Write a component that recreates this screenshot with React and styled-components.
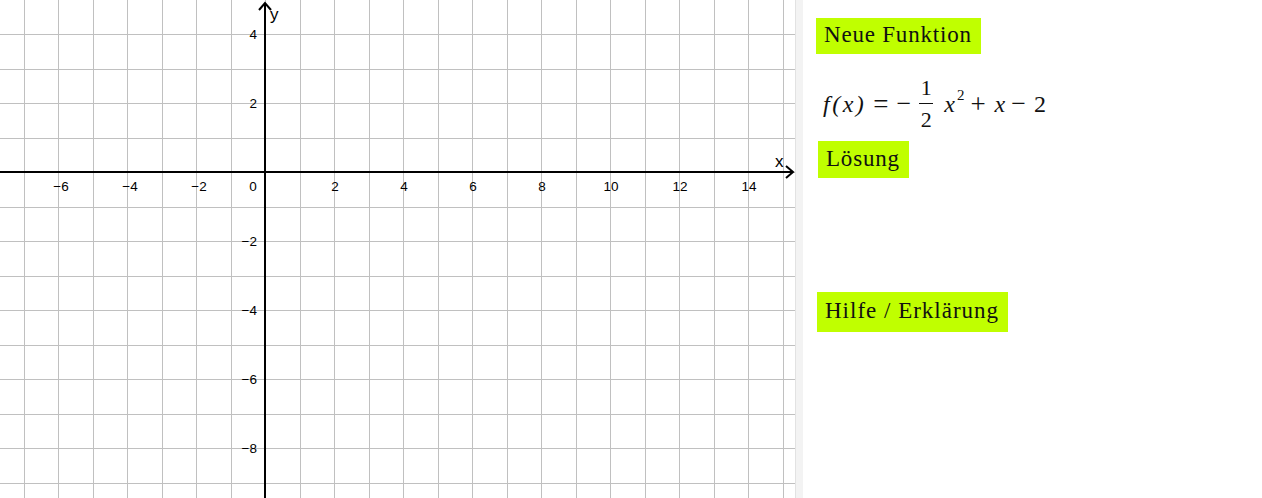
import React from 'react';
import styled, { createGlobalStyle } from 'styled-components';

const GlobalStyle = createGlobalStyle`
  html, body {
    margin: 0;
    padding: 0;
    background: #fff;
    overflow: hidden;
  }
`;

// Koordinatensystem
const UNIT = 34.5;
const ORIGIN_X = 265;
const ORIGIN_Y = 172;
const GRAPH_W = 795;
const GRAPH_H = 498;

const Page = styled.div`
  display: flex;
  width: 1262px;
  height: 498px;
`;

const GraphPane = styled.div`
  width: ${GRAPH_W}px;
  height: ${GRAPH_H}px;
  flex: none;
`;

const Divider = styled.div`
  width: 7px;
  flex: none;
  background: #f3f3f3;
  border-left: 1px solid #e2e2e2;
`;

const SidePanel = styled.div`
  flex: 1;
  display: flex;
  flex-direction: column;
  align-items: flex-start;
  padding-top: 18px;
  font-family: 'Liberation Serif', 'Times New Roman', serif;
  color: #111;
`;

const GreenButton = styled.button`
  display: flex;
  align-items: center;
  height: ${(p) => p.$h}px;
  margin-left: ${(p) => p.$left}px;
  margin-top: ${(p) => p.$top}px;
  padding: 0 9px 2px 8px;
  border: none;
  background: #c0ff00;
  font-family: 'Liberation Serif', 'Times New Roman', serif;
  font-size: 23px;
  letter-spacing: ${(p) => p.$ls || 0.8}px;
  color: #111;
  cursor: pointer;
`;

const Formula = styled.div`
  display: flex;
  align-items: center;
  margin-left: 20px;
  margin-top: 26px;
  height: 48px;
  font-size: 24px;
  line-height: 1;
`;

const Tok = styled.span`
  margin-left: ${(p) => p.$ml || 0}px;
  font-style: ${(p) => (p.$it ? 'italic' : 'normal')};
  font-size: ${(p) => p.$fs || 24}px;
  letter-spacing: ${(p) => p.$ls || 0}px;
`;

const Fraction = styled.span`
  display: inline-flex;
  flex-direction: column;
  align-items: center;
  margin-left: ${(p) => p.$ml}px;
  font-size: 22px;
`;

const FracBar = styled.span`
  width: 14px;
  height: 1px;
  background: #111;
  margin: 4px 0 5px;
`;

const Sup = styled.span`
  font-size: 15px;
  align-self: flex-start;
  margin-top: 8px;
  margin-left: 2px;
`;

function Graph() {
  const vLines = [];
  for (let k = -7; k <= 15; k++) {
    const x = Math.round(ORIGIN_X + k * UNIT) + 0.5;
    vLines.push(<line key={`v${k}`} x1={x} y1={0} x2={x} y2={GRAPH_H} />);
  }
  const hLines = [];
  for (let k = -4; k <= 9; k++) {
    const y = Math.round(ORIGIN_Y + k * UNIT) + 0.5;
    hLines.push(<line key={`h${k}`} x1={0} y1={y} x2={GRAPH_W} y2={y} />);
  }

  const xLabels = [-6, -4, -2, 2, 4, 6, 8, 10, 12, 14];
  const yLabels = [4, 2, -2, -4, -6, -8];

  return (
    <svg width={GRAPH_W} height={GRAPH_H} viewBox={`0 0 ${GRAPH_W} ${GRAPH_H}`}>
      <g stroke="#c0c0c0" strokeWidth="1">
        {vLines}
        {hLines}
      </g>
      <g stroke="#000" strokeWidth="2" fill="none">
        <line x1={0} y1={ORIGIN_Y} x2={792} y2={ORIGIN_Y} />
        <line x1={ORIGIN_X} y1={3} x2={ORIGIN_X} y2={GRAPH_H} />
        <polyline points={`786,166 793,172 786,178`} strokeLinejoin="miter" />
        <polyline points={`259,10 265,3 271,10`} strokeLinejoin="miter" />
      </g>
      <g fontFamily="'Liberation Sans', Arial, sans-serif" fontSize="13.5" fill="#000">
        {xLabels.map((n) => (
          <text
            key={`xl${n}`}
            x={ORIGIN_X + n * UNIT + (n < 0 ? 3 : 1)}
            y={191}
            textAnchor="middle"
          >
            {n < 0 ? `\u2212${-n}` : n}
          </text>
        ))}
        <text x={253} y={191} textAnchor="middle">0</text>
        {yLabels.map((n) => (
          <text
            key={`yl${n}`}
            x={257}
            y={ORIGIN_Y - n * UNIT + 5}
            textAnchor="end"
          >
            {n < 0 ? `\u2212${-n}` : n}
          </text>
        ))}
        <text x={270} y={20} fontSize="17">y</text>
        <text x={775} y={167} fontSize="17">x</text>
      </g>
    </svg>
  );
}

export default function App() {
  return (
    <>
      <GlobalStyle />
      <Page>
        <GraphPane>
          <Graph />
        </GraphPane>
        <Divider />
        <SidePanel>
          <GreenButton $h={36} $left={13} $top={0}>Neue Funktion</GreenButton>
          <Formula>
            <Tok $it $ls={2.5}>f(x)</Tok>
            <Tok $ml={7} $fs={27}>=</Tok>
            <Tok $ml={8} $fs={26}>{'\u2212'}</Tok>
            <Fraction $ml={8}>
              <span>1</span>
              <FracBar />
              <span>2</span>
            </Fraction>
            <Tok $it $ml={11}>x</Tok>
            <Sup>2</Sup>
            <Tok $ml={6} $fs={27}>+</Tok>
            <Tok $it $ml={9}>x</Tok>
            <Tok $ml={6} $fs={26}>{'\u2212'}</Tok>
            <Tok $ml={8}>2</Tok>
          </Formula>
          <GreenButton $h={37} $left={15} $top={13}>Lösung</GreenButton>
          <GreenButton $h={40} $left={14} $top={114} $ls={1}>Hilfe / Erklärung</GreenButton>
        </SidePanel>
      </Page>
    </>
  );
}
